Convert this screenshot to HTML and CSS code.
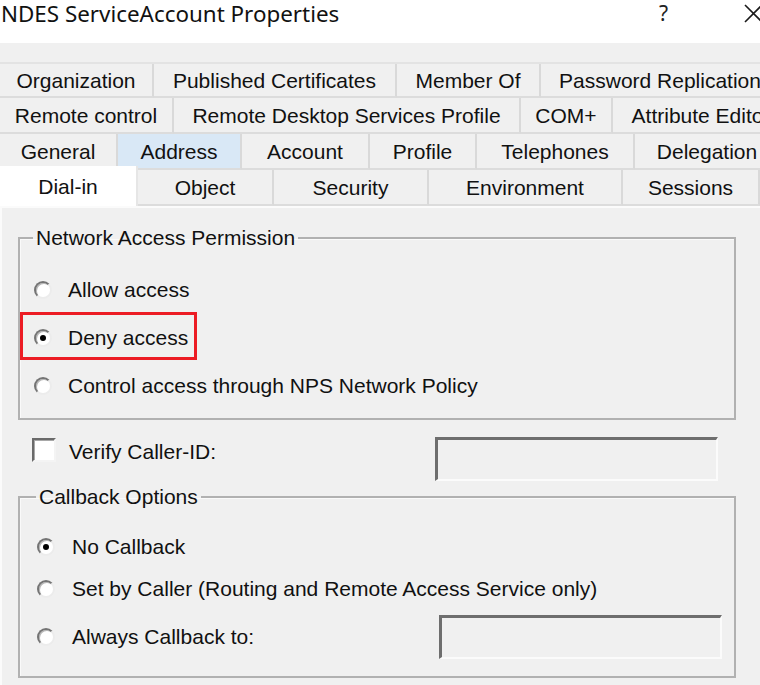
FILE: index.html
```html
<!DOCTYPE html>
<html lang="en">
<head>
<meta charset="utf-8">
<title>NDES ServiceAccount Properties</title>
<link rel="stylesheet" href="styles.css">
</head>
<body>
<div class="dialog">
  <header class="titlebar">
    <div class="title">NDES ServiceAccount Properties</div>
    <div class="tb-buttons">
      <span class="help">?</span>
      <svg class="close" width="20" height="20" viewBox="0 0 20 20" aria-label="Close">
        <path d="M2 2 L19 19 M19 2 L2 19" stroke="#1a1a1a" stroke-width="1.6" fill="none"/>
      </svg>
    </div>
  </header>

  <nav class="tabstrip">
    <div class="tabrow row1">
      <div class="tab">Organization</div>
      <div class="tab">Published Certificates</div>
      <div class="tab">Member Of</div>
      <div class="tab">Password Replication</div>
    </div>
    <div class="tabrow row2">
      <div class="tab">Remote control</div>
      <div class="tab">Remote Desktop Services Profile</div>
      <div class="tab">COM+</div>
      <div class="tab">Attribute Editor</div>
    </div>
    <div class="tabrow row3">
      <div class="tab">General</div>
      <div class="tab hover">Address</div>
      <div class="tab">Account</div>
      <div class="tab">Profile</div>
      <div class="tab">Telephones</div>
      <div class="tab">Delegation</div>
    </div>
    <div class="tabrow row4">
      <div class="tab selected">Dial-in</div>
      <div class="tab">Object</div>
      <div class="tab">Security</div>
      <div class="tab">Environment</div>
      <div class="tab">Sessions</div>
    </div>
  </nav>

  <main class="panel">
    <fieldset class="group group-access">
      <legend>Network Access Permission</legend>
      <div class="opt"><span class="radio"></span><span>Allow access</span></div>
      <div class="opt marked"><span class="radio checked"></span><span>Deny access</span></div>
      <div class="opt"><span class="radio"></span><span>Control access through NPS Network Policy</span></div>
    </fieldset>

    <div class="verify">
      <span class="check"></span>
      <span class="verify-label">Verify Caller-ID:</span>
      <span class="textbox"></span>
    </div>

    <fieldset class="group group-callback">
      <legend>Callback Options</legend>
      <div class="opt short"><span class="radio checked"></span><span>No Callback</span></div>
      <div class="opt short"><span class="radio"></span><span>Set by Caller (Routing and Remote Access Service only)</span></div>
      <div class="opt always"><span class="radio"></span><span>Always Callback to:</span><span class="textbox"></span></div>
    </fieldset>
  </main>
</div>
</body>
</html>
```

FILE: styles.css
```css
*, *::before, *::after { box-sizing: border-box; }

html, body {
  margin: 0;
  padding: 0;
  width: 760px;
  height: 685px;
  overflow: hidden;
  background: #f0f0f0;
}

body {
  font-family: "Liberation Sans", Arial, sans-serif;
  font-size: 21px;
  color: #111;
}

.dialog {
  width: 760px;
  height: 685px;
  display: flex;
  flex-direction: column;
}

/* Title bar */
.titlebar {
  height: 43px;
  background: #fff;
  display: flex;
  align-items: flex-start;
  justify-content: space-between;
  flex-shrink: 0;
}

.title {
  font-family: "Noto Sans", "Liberation Sans", sans-serif;
  font-size: 22.4px;
  line-height: 26px;
  padding-left: 1px;
  padding-top: 1px;
  color: #111;
}

.tb-buttons {
  display: flex;
  align-items: flex-start;
}

.help {
  font-family: "Noto Sans", "Liberation Sans", sans-serif;
  font-size: 21px;
  line-height: 26px;
  width: 20px;
  margin-right: 64px;
  color: #222;
}

.close {
  display: block;
  margin-top: 3px;
  margin-right: -3px;
}

/* Tabs */
.tabstrip {
  padding-top: 18px;
  border-top: 1px solid #f0f0f0;
  flex-shrink: 0;
  overflow: hidden;
}

.tabstrip .row1 { border-top: 2px solid #e3e3e3; }

.tabrow {
  display: grid;
  height: 36px;
  white-space: nowrap;
}

.row1 { grid-template-columns: 154px 243px 144px 240px; }
.row2 { grid-template-columns: 174px 347px 92px 178px; }
.row3 { grid-template-columns: 118px 124px 128px 107px 158px 146px; }
.row4 { grid-template-columns: 138px 136px 155px 194px 137px; }

.tab {
  display: flex;
  align-items: center;
  justify-content: center;
  background: #f0f0f0;
  border-right: 2px solid #d9d9d9;
  border-bottom: 2px solid #dcdcdc;
  line-height: 1;
  overflow: hidden;
}

.tab.hover {
  background: #d9e8f6;
}

.tab.selected {
  background: #fff;
  margin-top: -4px;
  margin-bottom: -2px;
  border: none;
  border-right: 2px solid #e6e6e6;
  position: relative;
  z-index: 1;
  padding-bottom: 2px;
}

/* Panel */
.panel {
  flex: 1;
  background: #f0f0f0;
  border-top: 2px solid #fbfbfb;
  border-left: 2px solid #fbfbfb;
  padding-top: 18px;
}

.group {
  margin: 0 24px 0 16px;
  border: 2px solid #b1b1b1;
  box-shadow: inset 1px 1px 0 #fafafa;
  min-width: 0;
}

.group legend {
  line-height: 24px;
  padding: 0 3px;
  margin-left: -1px;
}

.group-access {
  padding: 16px 0 8px 14px;
}

.group-callback {
  margin-top: 4px;
  padding: 17px 12px 17px 17px;
}

.opt {
  display: flex;
  align-items: center;
  height: 48px;
  gap: 16px;
}

.opt.short {
  height: 42px;
  gap: 17px;
}

.opt.always {
  height: 44px;
  margin-top: 5px;
  gap: 17px;
}

.opt.always .textbox {
  margin-left: auto;
}

.opt.marked {
  position: relative;
}

.opt.marked::after {
  content: "";
  position: absolute;
  left: -14px;
  top: -2px;
  width: 177px;
  height: 48px;
  border: 3px solid #ec1c24;
}

.radio {
  width: 18px;
  height: 18px;
  border-radius: 50%;
  background: #fff;
  border: 2px solid;
  border-color: #747474 #ececec #ececec #747474;
  box-shadow: inset 1px 1px 0 #b8b8b8;
  display: flex;
  align-items: center;
  justify-content: center;
  flex-shrink: 0;
}

.radio.checked::before {
  content: "";
  width: 6px;
  height: 6px;
  border-radius: 50%;
  background: #000;
}

/* Verify Caller-ID row */
.verify {
  display: flex;
  align-items: flex-start;
  height: 44px;
  margin-top: 17px;
  padding-left: 30px;
  padding-right: 42px;
}

.check {
  width: 24px;
  height: 24px;
  margin-top: 1px;
  background: #fff;
  border: 2px solid;
  border-color: #6a6a6a #f4f4f4 #f4f4f4 #6a6a6a;
  box-shadow: inset 1px 1px 0 #a8a8a8;
  flex-shrink: 0;
}

.verify-label {
  margin-left: 13px;
  line-height: 24px;
  margin-top: 3px;
}

.textbox {
  margin-left: auto;
  width: 283px;
  height: 44px;
  background: #f0f0f0;
  border-style: solid;
  border-width: 3px 2px 2px 3px;
  border-color: #6e6e6e #fbfbfb #fbfbfb #6e6e6e;
  flex-shrink: 0;
}
```
